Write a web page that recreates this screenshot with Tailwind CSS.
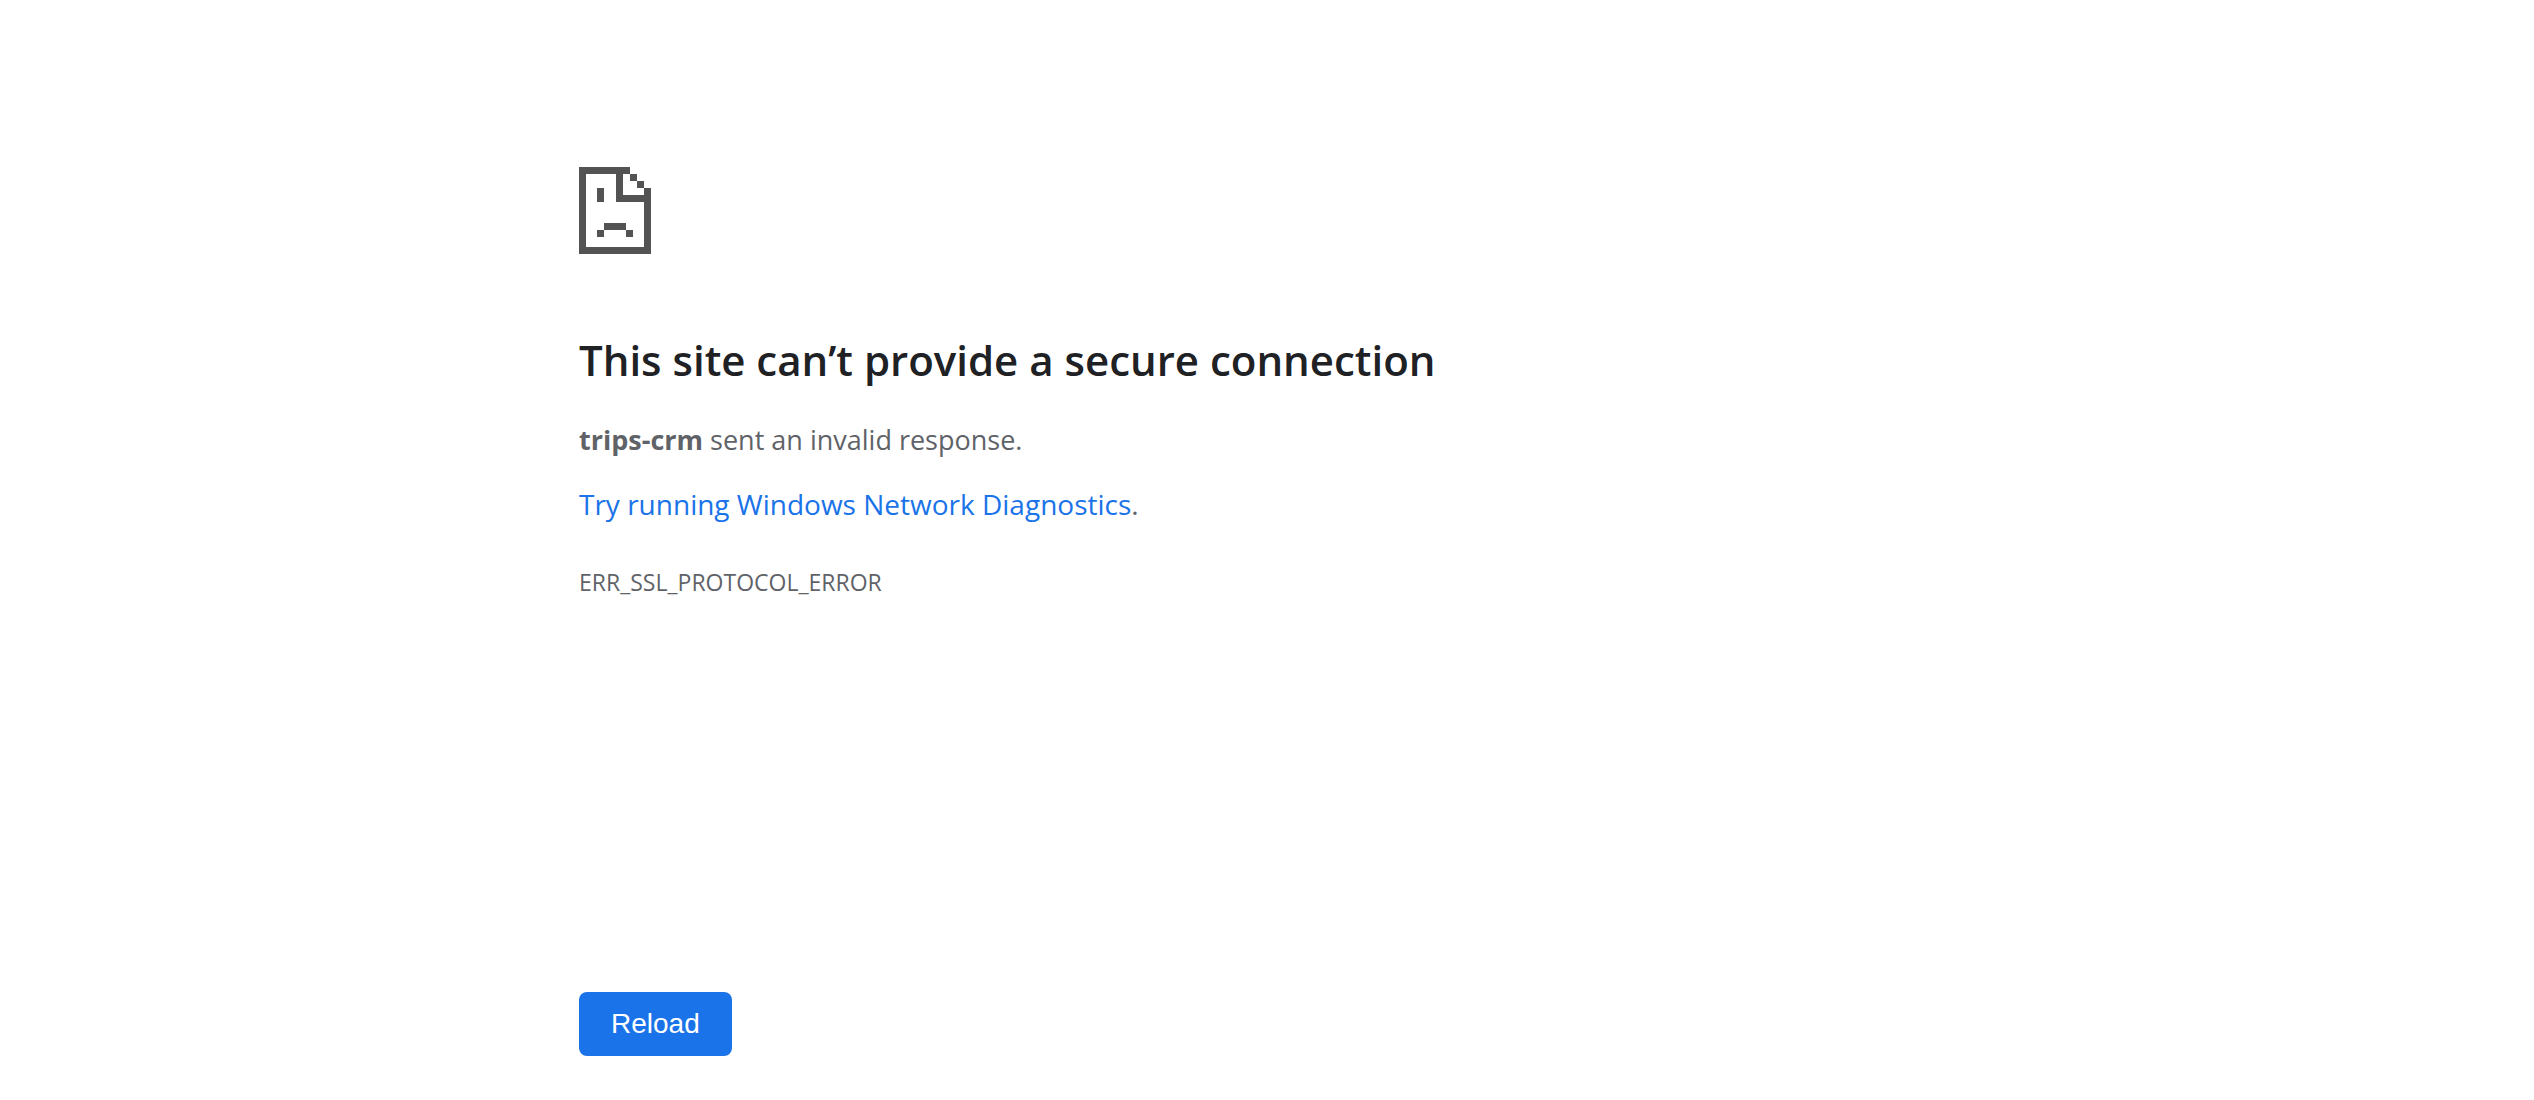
<!DOCTYPE html>
<html lang="en">
<head>
<meta charset="utf-8">
<meta name="viewport" content="width=device-width, initial-scale=1">
<title>trips-crm</title>
<script src="https://cdn.jsdelivr.net/npm/@tailwindcss/browser@4"></script>
</head>
<body class="bg-white font-['Segoe_UI','Open_Sans',sans-serif] text-[28px] leading-10 text-[#5f6368]">
<main class="mx-auto max-w-[1376px] pt-[167px]">
  <svg class="block h-[87px] w-[72px]" viewBox="0 0 72 87" fill="#535353" shape-rendering="crispEdges" role="img" aria-label="Page error">
    <path d="M0 0H51V7H44V28H65V21H72V87H0ZM7 7V80H65V35H37V7Z" fill-rule="evenodd"/>
    <path d="M51 7h7v7h-7zM58 14h7v7h-7zM18 21h7v14h-7zM25 56h22v7h-22zM18 63h7v7h-7zM47 63h7v7h-7z"/>
  </svg>
  <h1 class="mt-[78px] text-[42px] leading-14 font-semibold text-[#202124]">This site can’t provide a secure connection</h1>
  <p class="mt-8 text-[27px] leading-10"><strong class="font-bold">trips-crm</strong> sent an invalid response.</p>
  <p class="mt-6"><a href="#" class="text-[#1a73e8]">Try running Windows Network Diagnostics</a>.</p>
  <p class="mt-10 text-[23px] leading-9">ERR_SSL_PROTOCOL_ERROR</p>
  <button type="button" class="mt-[392px] h-16 rounded-lg bg-[#1a73e8] px-8 font-['Liberation_Sans',Arial,sans-serif] text-[28px] text-white">Reload</button>
</main>
</body>
</html>
